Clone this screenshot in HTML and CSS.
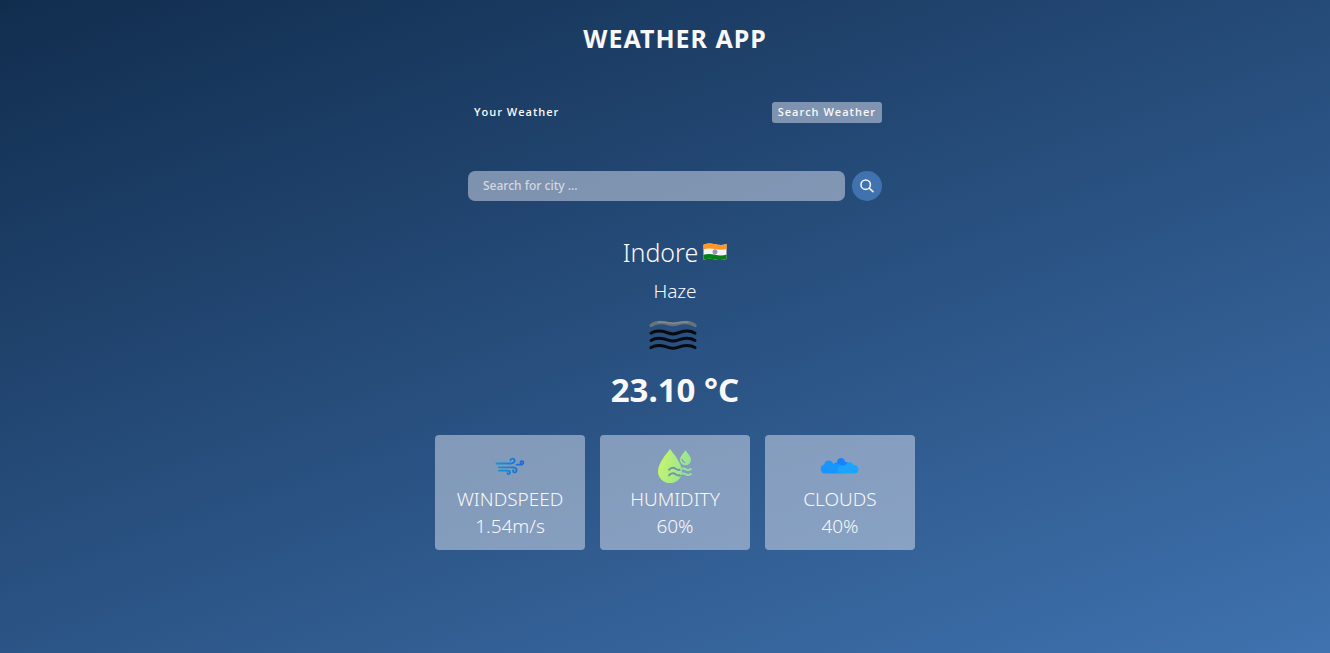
FILE: index.html
```html
<!DOCTYPE html>
<html lang="en">
<head>
<meta charset="utf-8">
<meta name="viewport" content="width=device-width, initial-scale=1">
<title>Weather App</title>
<link rel="stylesheet" href="styles.css">
</head>
<body>
<main class="wrapper">
  <h1 class="title">WEATHER APP</h1>
  <nav class="tabs">
    <button type="button" class="tab">Your Weather</button>
    <button type="button" class="tab tab-current">Search Weather</button>
  </nav>
  <form class="search">
    <input class="search-input" type="text" aria-label="Search for city" placeholder="Search for city ...">
    <button class="search-button" type="button" aria-label="Search">
      <svg width="14" height="14" viewBox="0 0 14 14" fill="none" stroke="#f0f3f8" stroke-width="1.6" stroke-linecap="round"><circle cx="5.700" cy="5.700" r="4.700"/><path d="M9.200 9.200 13 12.600"/></svg>
    </button>
  </form>
  <section class="report">
    <div class="place">
      <p class="city">Indore</p>
      <svg class="flag" width="24" height="18" viewBox="0 0 24 18" role="img" aria-label="India">
        <defs><clipPath id="wave"><path d="M.5 1.800C4 .2 8 .2 12 1.200s8 1 11.500-.2V16c-3.500 1.400-7.500 1.400-11.500.5S4 15.500.5 17z"/></clipPath></defs>
        <g clip-path="url(#wave)">
          <path fill="#f4f4f4" d="M0 0h24v18H0z"/>
          <path fill="#ff9722" d="M0 0h24v6c-4 1.200-8 .9-12 .1S4 5.300 0 6.500z"/>
          <path fill="#078016" d="M0 12c4-1.300 8-1 12-.2s8 .9 12-.4V18H0z"/>
          <circle cx="12" cy="8.900" r="2.100" fill="#b9b9de" stroke="#5656a5" stroke-width=".6"/><circle cx="12" cy="8.900" r=".7" fill="#30308f"/>
        </g>
      </svg>
    </div>
    <p class="description">Haze</p>
    <svg class="haze" width="50" height="50" viewBox="0 0 50 50" fill="none" stroke-width="3" stroke-linecap="round">
      <path stroke="#68727b" stroke-width="3.400" d="M3 15.500c3-2.200 7-3.200 11-2.900 5 .3 7 2 11 2s6-1.700 11-2c4-.3 8 .7 11 2.900"/>
      <path stroke="#858a8f" stroke-width="1.500" d="M10 12.200c5-1.200 9 1 15 1s10-2.200 15-1"/>
      <g stroke="#050a10"><path id="band" d="M3 23.200c3-1.900 7-2.500 11-1.900 5 .8 7 2.600 11 2.600s6-1.800 11-2.600c4-.6 8 0 11 1.900"/><use href="#band" y="7.200"/><use href="#band" y="14.400"/></g>
    </svg>
    <p class="temperature">23.10 °C</p>
    <div class="cards">
      <article class="card">
        <svg class="card-icon" width="50" height="50" viewBox="0 0 50 50" fill="none" stroke-width="1.800" stroke-linecap="round">
          <defs><linearGradient id="wind" gradientUnits="userSpaceOnUse" x1="10" y1="0" x2="39" y2="0"><stop stop-color="#1299d2"/><stop offset="1" stop-color="#1c67d6"/></linearGradient></defs>
          <g stroke="url(#wind)"><path d="M11.500 23.500H26c2.300 0 3.600-1.300 3.600-2.900 0-2.400-3.800-2.700-4.200-.2"/><path d="M31.500 24.700h4c3.700 0 3.400-4.100 1-3.600-1.200.3-1.300 1.300-.7 2"/><path d="M13.800 27.300H28c5 0 4.200 5.500 1.200 5.100-1.300-.2-1.700-1.400-.8-2.200"/><path d="M14 30.700h8.500c3.400 0 3 3.700.8 3.500-.8-.1-1-.6-.7-1.200"/></g>
        </svg>
        <p>WINDSPEED</p><p>1.54m/s</p>
      </article>
      <article class="card">
        <svg class="card-icon" width="50" height="50" viewBox="0 0 50 50">
          <defs><linearGradient id="water" gradientUnits="userSpaceOnUse" x1="9" y1="20" x2="42" y2="30"><stop stop-color="#c8f46b"/><stop offset="1" stop-color="#8de29c"/></linearGradient></defs>
          <path fill="url(#water)" d="M20 9c4 5.300 12 14.500 12 22.500a12 11.500 0 0 1-24 0C8 23.500 16 14.300 20 9z"/>
          <path fill="url(#water)" stroke="#839bbd" d="M35.500 9.700c2 2.800 6 6.600 6 10.300a6 5.700 0 0 1-12 0c0-3.700 4-7.500 6-10.300z"/>
          <path fill="none" stroke="#839bbd" stroke-width="1.300" stroke-linecap="round" d="M32 19.500c.3 1.600 1.200 2.500 2.800 2.900"/>
          <g fill="none" stroke-width="2"><g stroke="#7395a5"><path id="ripple" d="M18.500 30.300c3-3.500 5-3 7.500-1.300 3 2 4 .6 6.500-.2"/><use href="#ripple" y="5.500"/></g><g stroke="#94e49a"><path id="wash" d="M30 29.300c3-1.600 4-1.200 6 0s3.500 1.100 5.500-.8"/><use href="#wash" y="5"/></g></g>
        </svg>
        <p>HUMIDITY</p><p>60%</p>
      </article>
      <article class="card">
        <svg class="card-icon" width="50" height="50" viewBox="0 0 50 50">
          <path fill="#1682ff" d="M18 30c-1.200-4 .2-7.200 4-7.500.2-5.600 7.300-5.900 8.200-.5 3.600-.3 5.600 2.500 4.800 8z"/>
          <path fill="#1796ff" d="M10 33.500c-5.500 0-5.500-8.500-.8-9 .5-5 8-5.600 9-.3C26 22 28 26 27 33.500z"/>
          <path fill="#1ba5ff" d="M24 33.500c-3.500-5.500 1-9.500 6-7.800 1-4.300 7.600-4.800 8.500-.7 7 .4 6 8.500 1.500 8.500z"/>
        </svg>
        <p>CLOUDS</p><p>40%</p>
      </article>
    </div>
  </section>
</main>
</body>
</html>
```
FILE: styles.css
```css
* {
  box-sizing: border-box;
  margin: 0;
  padding: 0;
}

body {
  min-height: 100vh;
  padding-left: 20px;
  background: linear-gradient(160deg, #112d4e 0%, #3f72af 100%);
  color: #f9f7f7;
  font-family: "Noto Sans", "Open Sans", sans-serif;
}

button,
input {
  border: 0;
  color: inherit;
  font-family: inherit;
}

.wrapper {
  display: flex;
  flex-direction: column;
  align-items: center;
  padding-top: 22px;
}

.title {
  font-size: 25px;
  line-height: 32px;
  letter-spacing: 1px;
}

.tabs,
.search {
  display: flex;
  width: 100%;
  max-width: 414px;
}

.tabs {
  justify-content: space-between;
  margin-top: 48px;
}

.tab {
  padding: 0 6px 1px;
  border-radius: 3px;
  background: transparent;
  font-family: "Open Sans", "Noto Sans", sans-serif;
  font-size: 11px;
  font-weight: 600;
  line-height: 20px;
  letter-spacing: 1px;
}

.tab-current {
  background: rgba(219, 226, 239, 0.5);
}

.search {
  gap: 7px;
  margin-top: 48px;
}

.search-input {
  flex: 1;
  min-width: 0;
  height: 30px;
  padding: 0 15px 1px;
  border-radius: 7px;
  background: rgba(219, 226, 239, 0.5);
  font-size: 12px;
  font-weight: 500;
}

.search-input::placeholder {
  color: rgba(249, 247, 247, 0.7);
}

.search-button {
  display: grid;
  place-items: center;
  width: 30px;
  height: 30px;
  border-radius: 50%;
  background: #3f72af;
}

.report {
  display: flex;
  flex-direction: column;
  align-items: center;
  margin-top: 34px;
}

.place {
  display: flex;
  align-items: center;
  gap: 5px;
}

.city {
  font-size: 25px;
  font-weight: 300;
  line-height: 34px;
}

.description {
  margin-top: 9px;
  font-size: 19px;
  font-weight: 300;
  line-height: 26px;
}

.haze {
  margin-top: 6px;
  margin-right: 4px;
}

.temperature {
  margin-top: 7px;
  font-size: 33px;
  font-weight: 700;
  line-height: 46px;
}

.cards {
  display: flex;
  flex-wrap: wrap;
  justify-content: center;
  gap: 15px;
  margin-top: 22px;
}

.card {
  display: flex;
  flex-direction: column;
  align-items: center;
  width: 150px;
  padding: 5px 5px 10px;
  border-radius: 4px;
  background: rgba(219, 226, 239, 0.5);
  font-size: 19px;
  font-weight: 300;
  line-height: 27px;
}

.card-icon {
  margin-bottom: -4px;
}
```
